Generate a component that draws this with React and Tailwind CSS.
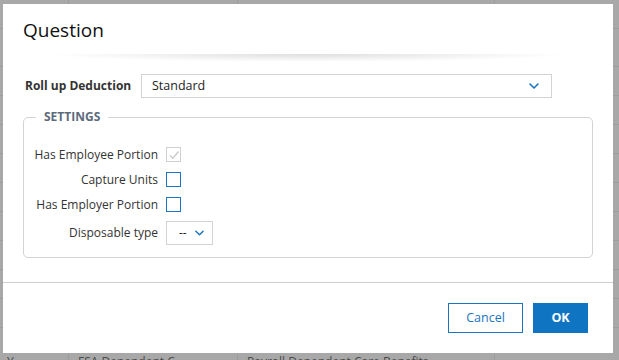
import React from 'react'

const font = { fontFamily: '"Open Sans", "Noto Sans", sans-serif' }

const Chevron = ({ className = '' }) => (
  <svg viewBox="0 0 10 6" className={className} fill="none" stroke="#1a74c0" strokeWidth="1.6" strokeLinecap="round" strokeLinejoin="round">
    <path d="M1 1l4 4 4-4" />
  </svg>
)

const Checkbox = ({ checked, disabled }) => (
  <span
    className={`w-[15px] h-[15px] border flex items-center justify-center bg-white shrink-0 ${disabled ? 'border-[#d0d0d0]' : 'border-[#1a74c0]'}`}
  >
    {checked && (
      <svg viewBox="0 0 12 12" className="w-[12px] h-[12px]" fill="none" stroke="#c8c8c8" strokeWidth="1.3">
        <path d="M2 6.5l2.8 2.8L10.5 2.5" />
      </svg>
    )}
  </span>
)

const Label = ({ children }) => (
  <span className="w-[124px] shrink-0 flex justify-end whitespace-nowrap">{children}</span>
)

const bgRows = [29, 38, 29, 29, 29, 29, 29, 29, 29, 29, 29]

const App = () => {
  return (
    <div className="relative w-[619px] h-[360px] overflow-hidden bg-[#a7a8a7]" style={font}>
      {/* backdrop table */}
      <div className="flex flex-col">
        {bgRows.map((h, i) => (
          <div key={i} className="flex border-b border-[#9c9d9c]" style={{ height: h }}>
            <div className="w-[69px] border-r border-[#9c9d9c]" />
            <div className="w-[169px] border-r border-[#9c9d9c]" />
            <div className="w-[257px] border-r border-[#9c9d9c]" />
            <div className="flex-1" />
          </div>
        ))}
        <div className="flex text-[12px] leading-[16px] text-[#4a4a4a] mt-[26px]">
          <div className="w-[69px] border-r border-[#9c9d9c] pl-[7px]">Y</div>
          <div className="w-[169px] border-r border-[#9c9d9c] pl-[9px]">FSA Dependent C</div>
          <div className="w-[257px] border-r border-[#9c9d9c] pl-[9px]">Payroll Dependent Care Benefits</div>
          <div className="flex-1" />
        </div>
      </div>

      {/* modal */}
      <div className="absolute left-[3px] top-[4px] w-[610px] h-[349px] bg-white flex flex-col">
        <div className="h-[50px] pl-[20px] pt-[13px]">
          <h1 className="text-[19px] leading-[26px] text-[#111]">Question</h1>
        </div>
        <div className="h-[8px] mx-[40px] bg-[radial-gradient(ellipse_at_top,rgba(0,0,0,0.13),rgba(0,0,0,0)_70%)]" />

        <div className="px-[20px] pt-[12px]">
          <div className="flex items-center h-[24px]">
            <span className="w-[118px] pl-[2px] text-[12px] font-bold text-[#333]">Roll up Deduction</span>
            <div className="w-[411px] h-[24px] border border-[#d3d3d3] flex items-center justify-between pl-[10px] pr-[12px]">
              <span className="text-[12.5px] text-[#222]">Standard</span>
              <Chevron className="w-[10px] h-[6px]" />
            </div>
          </div>

          <fieldset className="mt-[11px] border border-[#d3d3d3] rounded-[5px] px-[10px] pt-[17px] pb-[12px]">
            <legend className="ml-[2px] px-[8px] text-[12px] font-bold text-[#5b6b7c] leading-[16px]">SETTINGS</legend>
            <div className="flex flex-col text-[12px] text-[#333]">
              <div className="flex items-center h-[25px] gap-[8px]">
                <Label>Has Employee Portion</Label>
                <Checkbox checked disabled />
              </div>
              <div className="flex items-center h-[25px] gap-[8px]">
                <Label>Capture Units</Label>
                <Checkbox />
              </div>
              <div className="flex items-center h-[25px] gap-[8px]">
                <Label>Has Employer Portion</Label>
                <Checkbox />
              </div>
              <div className="flex items-center h-[24px] gap-[8px] mt-[4px]">
                <Label>Disposable type</Label>
                <div className="w-[47px] h-[24px] border border-[#d3d3d3] flex items-center pl-[12px] gap-[8px]">
                  <span className="text-[12px] text-[#222] leading-none">--</span>
                  <Chevron className="w-[9px] h-[6px]" />
                </div>
              </div>
            </div>
          </fieldset>
        </div>

        <div className="mt-auto border-t border-[#cfcfcf] h-[71px] flex justify-end items-start pt-[20px] pr-[25px] gap-[10px]">
          <button className="w-[75px] h-[30px] border border-[#1a74c0] text-[#1a74c0] text-[12.5px] bg-white">Cancel</button>
          <button className="w-[55px] h-[30px] bg-[#0f74c2] text-white text-[12.5px] font-bold">OK</button>
        </div>
      </div>
    </div>
  )
}

export default App
